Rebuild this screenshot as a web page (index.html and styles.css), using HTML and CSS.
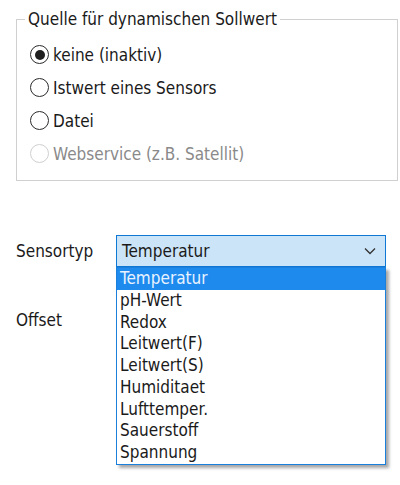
FILE: index.html
```html
<!DOCTYPE html>
<html>
<head>
<meta charset="utf-8">
<link rel="stylesheet" href="styles.css">
</head>
<body>
<div class="page">
  <fieldset class="group">
    <legend class="group-title">Quelle für dynamischen Sollwert</legend>
    <div class="radio-row">
      <span class="radio checked"></span><span class="radio-label">keine (inaktiv)</span>
    </div>
    <div class="radio-row">
      <span class="radio"></span><span class="radio-label">Istwert eines Sensors</span>
    </div>
    <div class="radio-row">
      <span class="radio"></span><span class="radio-label">Datei</span>
    </div>
    <div class="radio-row disabled">
      <span class="radio"></span><span class="radio-label">Webservice (z.B. Satellit)</span>
    </div>
  </fieldset>

  <div class="field-row sensor-row">
    <span class="field-label">Sensortyp</span>
    <div class="combo-wrap">
      <div class="combo">
        <span class="combo-value">Temperatur</span>
        <svg class="chevron" width="12" height="8" viewBox="0 0 12 8"><path d="M1 1.5 L6 6.5 L11 1.5" fill="none" stroke="#333" stroke-width="1.3"/></svg>
      </div>
      <ul class="dropdown">
        <li class="item selected">Temperatur</li>
        <li class="item">pH-Wert</li>
        <li class="item">Redox</li>
        <li class="item">Leitwert(F)</li>
        <li class="item">Leitwert(S)</li>
        <li class="item">Humiditaet</li>
        <li class="item">Lufttemper.</li>
        <li class="item">Sauerstoff</li>
        <li class="item">Spannung</li>
      </ul>
    </div>
  </div>

  <div class="field-row offset-row">
    <span class="field-label">Offset</span>
  </div>
</div>
</body>
</html>
```

FILE: styles.css
```css
html, body {
  margin: 0;
  padding: 0;
  background: #ffffff;
}

body {
  font-family: "DejaVu Sans Condensed", "DejaVu Sans", sans-serif;
  font-size: 17px;
  color: #1a1a1a;
  width: 400px;
  height: 485px;
  overflow: hidden;
}

.page {
  padding-top: 9px;
}

.group {
  margin: 0 2px 0 16px;
  padding: 9px 0 10px 13px;
  border: 1px solid #d0d0d0;
  min-width: 0;
}

.group-title {
  padding: 0 3px;
  margin-left: -5px;
  line-height: 20px;
}

.radio-row {
  display: flex;
  align-items: center;
  height: 33px;
  gap: 4px;
}

.radio {
  box-sizing: border-box;
  width: 19px;
  height: 19px;
  border: 1.5px solid #2b2b2b;
  border-radius: 50%;
  display: flex;
  align-items: center;
  justify-content: center;
  background: #fff;
}

.radio.checked::after {
  content: "";
  width: 10px;
  height: 10px;
  border-radius: 50%;
  background: #1f1f1f;
}

.disabled .radio {
  border-color: #cfcfcf;
}

.disabled .radio-label {
  color: #8a8a8a;
}

.field-row {
  display: flex;
  align-items: center;
  padding-left: 16px;
}

.sensor-row {
  margin-top: 54px;
}

.field-label {
  width: 100px;
}

.combo-wrap {
  position: relative;
}

.combo {
  box-sizing: border-box;
  width: 270px;
  height: 32px;
  border: 1px solid #0f78d4;
  background: #cce4f7;
  display: flex;
  align-items: center;
  justify-content: space-between;
  padding: 0 9px 0 5px;
}

.chevron {
  display: block;
}

.dropdown {
  position: absolute;
  left: 0;
  top: 32px;
  box-sizing: border-box;
  width: 270px;
  margin: 0;
  padding: 0;
  list-style: none;
  background: #fff;
  border: 1px solid #1a80dc;
  box-shadow: 3px 3px 3px rgba(0, 0, 0, 0.35);
  z-index: 2;
}

.item {
  height: 21.75px;
  line-height: 21.75px;
  padding-left: 3px;
  white-space: nowrap;
}

.item.selected {
  background: #1f8aee;
  color: #e9f3ff;
}

.offset-row {
  margin-top: 43px;
}
```
